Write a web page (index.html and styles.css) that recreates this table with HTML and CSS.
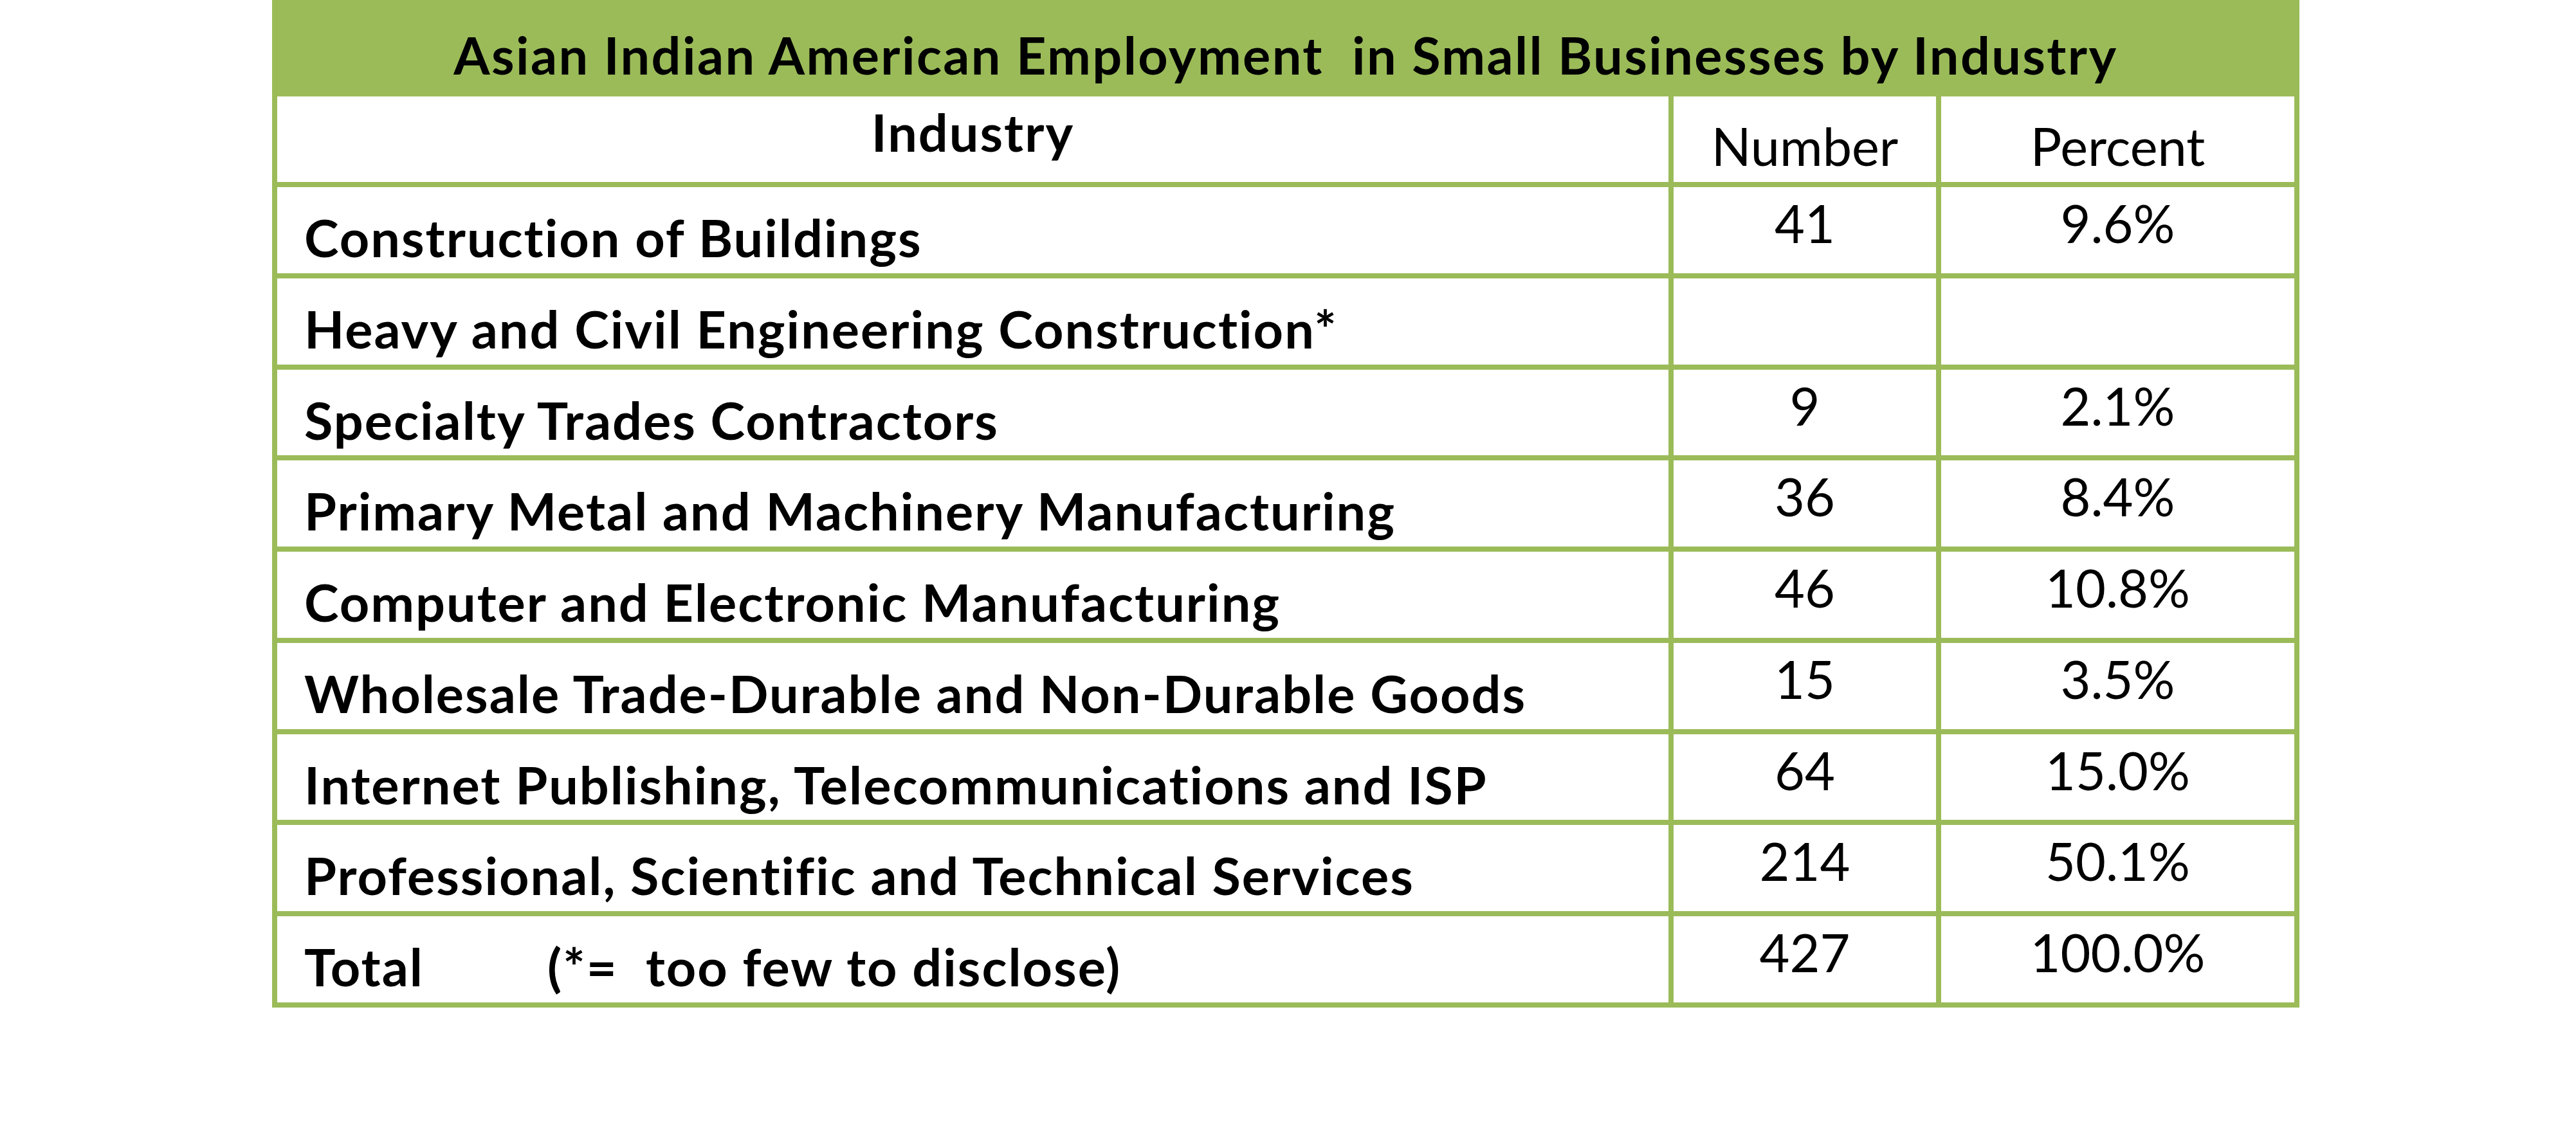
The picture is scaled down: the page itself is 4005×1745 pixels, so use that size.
FILE: index.html
```html
<!DOCTYPE html>
<html lang="en">
<head>
<meta charset="utf-8">
<title>Asian Indian American Employment in Small Businesses by Industry</title>
<link rel="stylesheet" href="styles.css">
</head>
<body>
<div class="sheet">
  <div class="title">Asian Indian American Employment&nbsp; in Small Businesses by Industry</div>
  <div class="grid">
    <div class="cell head-industry">Industry</div>
    <div class="cell head-num">Number</div>
    <div class="cell head-num">Percent</div>

    <div class="cell label">Construction of Buildings</div>
    <div class="cell num">41</div>
    <div class="cell num">9.6%</div>

    <div class="cell label">Heavy and Civil Engineering Construction*</div>
    <div class="cell num"></div>
    <div class="cell num"></div>

    <div class="cell label">Specialty Trades Contractors</div>
    <div class="cell num">9</div>
    <div class="cell num">2.1%</div>

    <div class="cell label">Primary Metal and Machinery Manufacturing</div>
    <div class="cell num">36</div>
    <div class="cell num">8.4%</div>

    <div class="cell label">Computer and Electronic Manufacturing</div>
    <div class="cell num">46</div>
    <div class="cell num">10.8%</div>

    <div class="cell label">Wholesale Trade-Durable and Non-Durable Goods</div>
    <div class="cell num">15</div>
    <div class="cell num">3.5%</div>

    <div class="cell label">Internet Publishing, Telecommunications and ISP</div>
    <div class="cell num">64</div>
    <div class="cell num">15.0%</div>

    <div class="cell label">Professional, Scientific and Technical Services</div>
    <div class="cell num">214</div>
    <div class="cell num">50.1%</div>

    <div class="cell label"><span class="total">Total</span><span class="note">(*=&nbsp; too few to disclose)</span></div>
    <div class="cell num">427</div>
    <div class="cell num">100.0%</div>
  </div>
</div>
</body>
</html>
```

FILE: styles.css
```css
html, body {
  margin: 0;
  padding: 0;
  background: #ffffff;
}

body {
  font-family: Lato, "Open Sans", "Liberation Sans", sans-serif;
  color: #000000;
  font-size: 81px;
  line-height: 81px;
  font-variant-ligatures: none;
  font-feature-settings: "liga" 0, "clig" 0;
}

.sheet {
  width: 3152px;
  margin-left: 423px;
}

.title {
  height: 150px;
  box-sizing: border-box;
  background: #9bbb59;
  padding-top: 44px;
  text-align: center;
  font-weight: 700;
  letter-spacing: 2.4px;
  white-space: nowrap;
}

.grid {
  display: grid;
  grid-template-columns: 2163px 408px 549px;
  grid-template-rows: 133px repeat(9, 133.75px);
  column-gap: 8px;
  row-gap: 8px;
  padding: 0 8px 8px 8px;
  background: #9bbb59;
}

.cell {
  background: #ffffff;
  box-sizing: border-box;
  white-space: nowrap;
}

.head-industry {
  font-weight: 700;
  letter-spacing: 2px;
  text-align: center;
  padding-top: 14px;
}

.head-num {
  text-align: center;
  padding-top: 36px;
}

.label {
  font-weight: 700;
  letter-spacing: 2px;
  padding-left: 42px;
  padding-top: 37px;
}

.num {
  text-align: center;
  padding-top: 15px;
}

.total {
  display: inline-block;
  width: 378px;
}
```
